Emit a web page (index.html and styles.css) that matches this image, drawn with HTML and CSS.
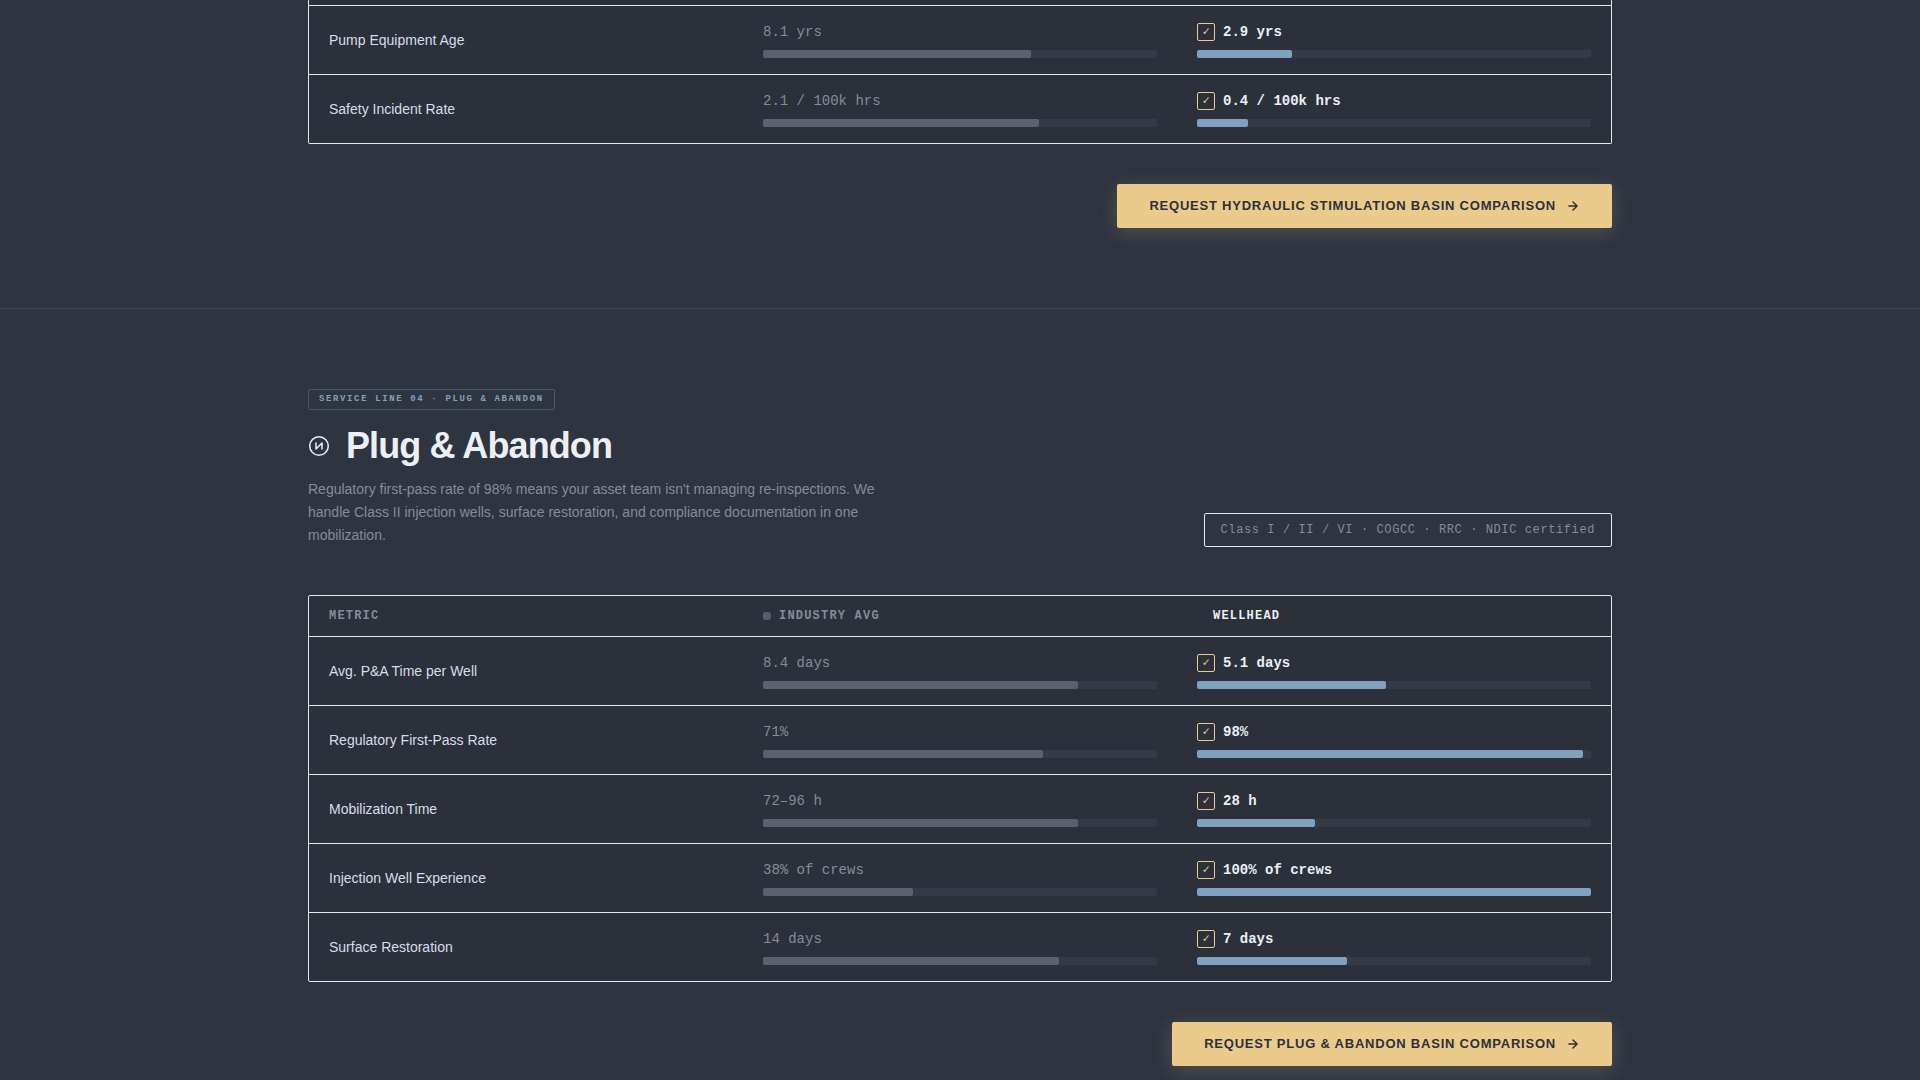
FILE: index.html
```html
<!DOCTYPE html>
<html lang="en">
  <head>
    <meta charset="utf-8" />
    <title>Wellhead Service Lines</title>
    <link rel="stylesheet" href="styles.css" />
  </head>
  <body>
    <section class="service">
      <div class="container">
        <div class="compare compare-continued">
          <div class="row">
            <div class="cell metric">Pump Equipment Age</div>
            <div class="cell">
              <div class="value">8.1 yrs</div>
              <div class="bar"><div class="fill" style="width: 68%"></div></div>
            </div>
            <div class="cell">
              <div class="value best"><span class="check">✓</span>2.9 yrs</div>
              <div class="bar"><div class="fill fill-best" style="width: 24%"></div></div>
            </div>
          </div>
          <div class="row">
            <div class="cell metric">Safety Incident Rate</div>
            <div class="cell">
              <div class="value">2.1 / 100k hrs</div>
              <div class="bar"><div class="fill" style="width: 70%"></div></div>
            </div>
            <div class="cell">
              <div class="value best"><span class="check">✓</span>0.4 / 100k hrs</div>
              <div class="bar"><div class="fill fill-best" style="width: 13%"></div></div>
            </div>
          </div>
        </div>
        <div class="actions">
          <a class="btn" href="#">
            Request Hydraulic Stimulation Basin Comparison
            <svg width="14" height="14" viewBox="0 0 24 24" fill="none" stroke="currentColor" stroke-width="2.5" stroke-linecap="round" stroke-linejoin="round">
              <path d="M5 12h14M12 5l7 7-7 7" />
            </svg>
          </a>
        </div>
      </div>
    </section>

    <section class="service">
      <div class="container">
        <div class="service-head">
          <div class="intro">
            <div class="tag">Service Line 04 · Plug &amp; Abandon</div>
            <h2>
              <svg width="22" height="22" viewBox="0 0 22 22" fill="none" stroke="currentColor" stroke-width="1.5" stroke-linecap="round" stroke-linejoin="round">
                <circle cx="11" cy="11" r="9.3" />
                <path d="M8 8v6l6-6v6" />
              </svg>
              Plug &amp; Abandon
            </h2>
            <p>
              Regulatory first-pass rate of 98% means your asset team isn't
              managing re-inspections. We handle Class II injection wells,
              surface restoration, and compliance documentation in one
              mobilization.
            </p>
          </div>
          <div class="certs">Class I / II / VI · COGCC · RRC · NDIC certified</div>
        </div>

        <div class="compare">
          <div class="row row-head">
            <div class="cell">Metric</div>
            <div class="cell"><span class="dot"></span>Industry Avg</div>
            <div class="cell brand"><span class="dot dot-brand"></span>Wellhead</div>
          </div>
          <div class="row">
            <div class="cell metric">Avg. P&amp;A Time per Well</div>
            <div class="cell">
              <div class="value">8.4 days</div>
              <div class="bar"><div class="fill" style="width: 80%"></div></div>
            </div>
            <div class="cell">
              <div class="value best"><span class="check">✓</span>5.1 days</div>
              <div class="bar"><div class="fill fill-best" style="width: 48%"></div></div>
            </div>
          </div>
          <div class="row">
            <div class="cell metric">Regulatory First-Pass Rate</div>
            <div class="cell">
              <div class="value">71%</div>
              <div class="bar"><div class="fill" style="width: 71%"></div></div>
            </div>
            <div class="cell">
              <div class="value best"><span class="check">✓</span>98%</div>
              <div class="bar"><div class="fill fill-best" style="width: 98%"></div></div>
            </div>
          </div>
          <div class="row">
            <div class="cell metric">Mobilization Time</div>
            <div class="cell">
              <div class="value">72–96 h</div>
              <div class="bar"><div class="fill" style="width: 80%"></div></div>
            </div>
            <div class="cell">
              <div class="value best"><span class="check">✓</span>28 h</div>
              <div class="bar"><div class="fill fill-best" style="width: 30%"></div></div>
            </div>
          </div>
          <div class="row">
            <div class="cell metric">Injection Well Experience</div>
            <div class="cell">
              <div class="value">38% of crews</div>
              <div class="bar"><div class="fill" style="width: 38%"></div></div>
            </div>
            <div class="cell">
              <div class="value best"><span class="check">✓</span>100% of crews</div>
              <div class="bar"><div class="fill fill-best" style="width: 100%"></div></div>
            </div>
          </div>
          <div class="row">
            <div class="cell metric">Surface Restoration</div>
            <div class="cell">
              <div class="value">14 days</div>
              <div class="bar"><div class="fill" style="width: 75%"></div></div>
            </div>
            <div class="cell">
              <div class="value best"><span class="check">✓</span>7 days</div>
              <div class="bar"><div class="fill fill-best" style="width: 38%"></div></div>
            </div>
          </div>
        </div>
        <div class="actions">
          <a class="btn" href="#">
            Request Plug &amp; Abandon Basin Comparison
            <svg width="14" height="14" viewBox="0 0 24 24" fill="none" stroke="currentColor" stroke-width="2.5" stroke-linecap="round" stroke-linejoin="round">
              <path d="M5 12h14M12 5l7 7-7 7" />
            </svg>
          </a>
        </div>
      </div>
    </section>
  </body>
</html>
```
FILE: styles.css
```css
* {
  box-sizing: border-box;
}

body {
  margin: 0;
  height: 1080px;
  overflow: hidden;
  background-color: #2e3440;
  color: #d8dee9;
  font-family: "Liberation Sans", Arial, sans-serif;
  font-size: 14px;
}

.service {
  padding: 80px 0;
  border-bottom: 1px solid #414855;
}

.service:first-child {
  padding-top: 0;
}

.service:last-child {
  padding-bottom: 0;
  border-bottom: 0;
}

.container {
  width: 1304px;
  margin: 0 auto;
}

/* section heading */
.service-head {
  display: flex;
  justify-content: space-between;
  align-items: flex-end;
  margin-bottom: 48px;
}

.intro {
  width: 580px;
}

.tag {
  width: fit-content;
  height: 21px;
  padding: 3px 10px;
  border: 1px solid #4c566a;
  border-radius: 2px;
  color: #81a1c1;
  font-family: "Liberation Mono", monospace;
  font-size: 9px;
  font-weight: bold;
  letter-spacing: 0.18em;
  line-height: 12px;
  text-transform: uppercase;
}

h2 {
  display: flex;
  align-items: center;
  gap: 16px;
  margin: 16px 0 12px;
  color: #eceff4;
  font-size: 36px;
  letter-spacing: -0.025em;
  line-height: 40px;
}

.intro p {
  margin: 0;
  color: #868c96;
  line-height: 23px;
}

.certs {
  padding: 0 16px;
  border: 1px solid #e5e9f0;
  border-radius: 2px;
  color: #868c96;
  font-family: "Liberation Mono", monospace;
  font-size: 12px;
  letter-spacing: 0.05em;
  line-height: 32px;
}

/* comparison table */
.compare {
  border: 1px solid #e5e9f0;
  border-radius: 2px;
  background-color: #2b303b;
}

.compare-continued {
  padding-top: 5px;
  border-top: 0;
  border-radius: 0 0 2px 2px;
}

.row {
  display: grid;
  grid-template-columns: repeat(3, 1fr);
  border-bottom: 1px solid #e5e9f0;
}

.row:last-child {
  border-bottom: 0;
}

.compare-continued .row:first-child {
  border-top: 1px solid #e5e9f0;
}

.cell {
  padding: 16px 20px;
}

.row-head .cell {
  display: flex;
  align-items: center;
  gap: 8px;
  height: 40px;
  padding: 0 20px;
  color: #868c96;
  font-family: "Liberation Mono", monospace;
  font-size: 12px;
  font-weight: bold;
  letter-spacing: 0.1em;
  text-transform: uppercase;
}

.row-head .brand {
  color: #eceff4;
}

.dot {
  width: 8px;
  height: 8px;
  border-radius: 2px;
  background-color: #555b67;
}

.dot-brand {
  background-color: transparent;
}

.metric {
  display: flex;
  align-items: center;
}

.value {
  display: flex;
  align-items: center;
  gap: 8px;
  height: 20px;
  margin-bottom: 8px;
  color: #868c96;
  font-family: "Liberation Mono", monospace;
}

.best {
  color: #eceff4;
  font-weight: bold;
}

.check {
  width: 18px;
  height: 18px;
  border: 1px solid #ebcb8b;
  border-radius: 2px;
  color: #ebcb8b;
  font-size: 12px;
  font-weight: normal;
  line-height: 16px;
  text-align: center;
}

.bar {
  height: 8px;
  border-radius: 2px;
  background-color: #353b46;
}

.fill {
  height: 100%;
  border-radius: 2px;
  background-color: #5b626d;
}

.fill-best {
  background-color: #81a1c1;
}

/* call to action */
.actions {
  display: flex;
  justify-content: flex-end;
  margin-top: 40px;
}

.btn {
  display: flex;
  align-items: center;
  gap: 10px;
  height: 44px;
  padding: 0 32px 1px;
  border-radius: 2px;
  background-color: #ebcb8b;
  box-shadow: 0 4px 20px rgba(235, 203, 139, 0.2);
  color: #2b303b;
  font-size: 13px;
  font-weight: bold;
  letter-spacing: 0.06em;
  text-decoration: none;
  text-transform: uppercase;
}

.btn svg {
  margin-top: 1px;
}
```
